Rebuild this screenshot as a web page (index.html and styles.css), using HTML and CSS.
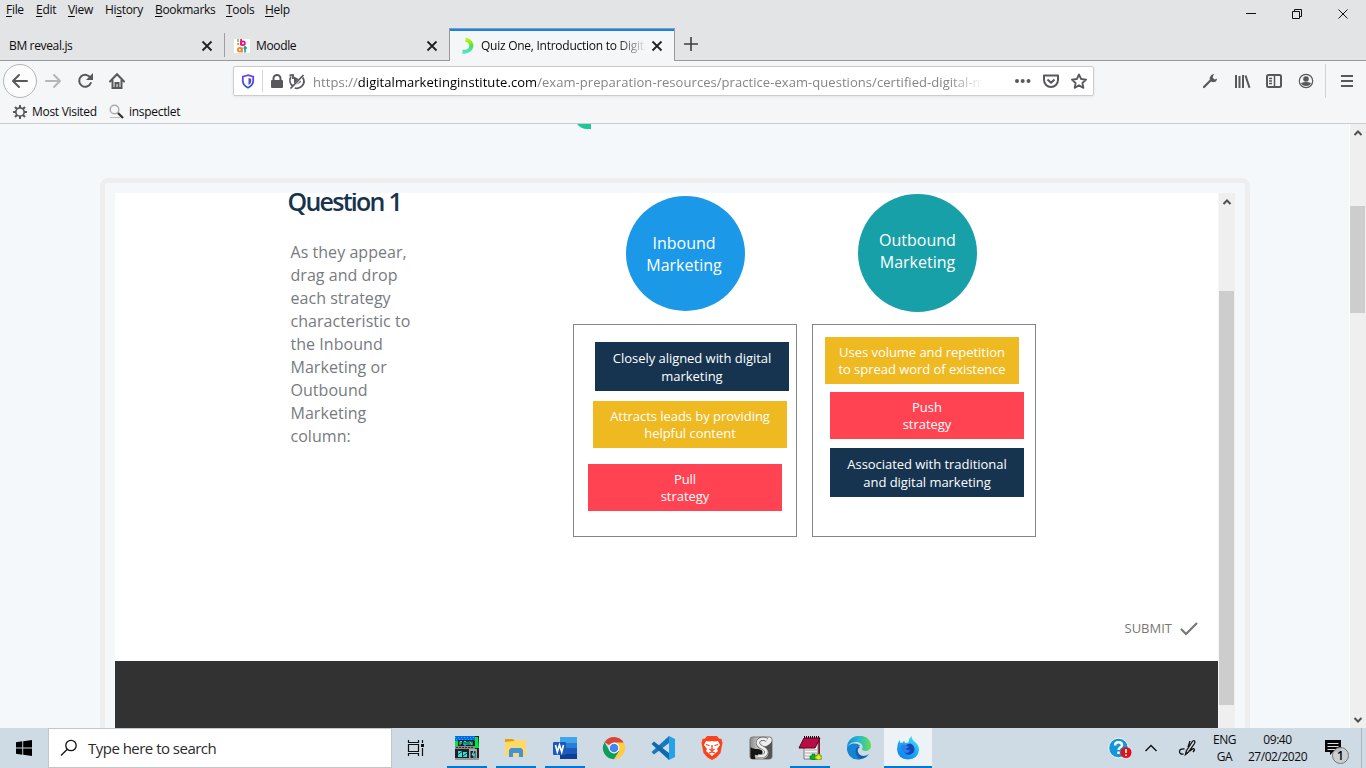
FILE: index.html
```html
<!DOCTYPE html>
<html lang="en">
<head>
<meta charset="utf-8">
<title>Quiz One, Introduction to Digital Marketing</title>
<link rel="stylesheet" href="styles.css">
</head>
<body>
<header class="titlebar">
  <div class="menurow">
    <nav class="menu"><span class="m1"><u>F</u>ile</span><span class="m2"><u>E</u>dit</span><span class="m3"><u>V</u>iew</span><span class="m4">Hi<u>s</u>tory</span><span class="m5"><u>B</u>ookmarks</span><span class="m6"><u>T</u>ools</span><span class="m7"><u>H</u>elp</span></nav>
    <svg class="winctl" width="130" height="28" viewBox="1236 0 130 28" fill="none" stroke="#111"><path d="M1246 13.500h10M1292.500 11.500h7v7h-7zM1294.500 11v-1.500h7v7h-2M1338.500 9.500l9 9M1347.500 9.500l-9 9"/></svg>
  </div>
  <div class="tabs">
    <div class="tab tab-a"><span class="label">BM reveal.js</span><svg class="close" width="12" height="12" viewBox="0 0 12 12"><path d="M1.500 1.500l9 9m0-9l-9 9"/></svg></div>
    <div class="tab tab-b">
      <svg class="fav" width="16" height="16" viewBox="0 0 16 16" fill="none" stroke-width="1.700"><path fill="#fff" d="M0 1h16v14H0z"/><path stroke="#8bc63e" d="M4 1v3"/><path stroke="#f58220" d="M4 5v2"/><path stroke="#e5127d" d="M7 1v6.500"/><circle cx="9" cy="5.300" r="1.900" stroke="#e5127d"/><circle cx="5.800" cy="11.800" r="1.900" stroke="#f58220"/><path stroke="#f58220" d="M8 9.500v5"/><path stroke="#00a7b5" d="M11 8v6.500M9.500 10h3.500"/></svg>
      <span class="label">Moodle</span><svg class="close" width="12" height="12" viewBox="0 0 12 12"><path d="M1.500 1.500l9 9m0-9l-9 9"/></svg></div>
    <div class="tab tab-c">
      <svg class="fav" width="16" height="18" viewBox="0 0 16 18" fill="none" stroke-width="4"><defs><linearGradient id="lg" x1="0" y1="0" x2="0" y2="1"><stop offset="0" stop-color="#b8f500"/><stop offset=".5" stop-color="#4be04e"/><stop offset="1" stop-color="#4fe3c9"/></linearGradient></defs><path stroke="url(#lg)" d="M6.500 2.800C15.500 4 14 15.500 3.500 14.800"/></svg>
      <span class="label">Quiz One, Introduction to Digit<span class="fadeout">a</span></span><svg class="close" width="12" height="12" viewBox="0 0 12 12"><path d="M1.500 1.500l9 9m0-9l-9 9"/></svg></div>
    <svg class="plus" width="14" height="14" viewBox="0 0 14 14" stroke="#3d3e40" stroke-width="1.600"><path d="M7 0v14M0 7h14"/></svg>
  </div>
</header>
<section class="toolbar">
  <div class="navrow">
    <svg class="navicons" width="140" height="40" viewBox="0 61 140 40" fill="none" stroke="#58585c" stroke-width="2" stroke-linecap="round" stroke-linejoin="round"><circle cx="20" cy="81" r="16.500" fill="#fcfcfc" stroke="#b5b5b8" stroke-width="1"/><path d="M13 81h14M19 75l-6 6 6 6"/><path stroke="#b6b6b9" d="M46 81h14M54 75l6 6-6 6"/><path d="M90.500 78a6 6 0 1 0 .3 5"/><path fill="#58585c" stroke="none" d="M86 80h7v-7z"/><path stroke-linejoin="miter" d="M110 81.500l7-7.200 7 7.200M112.500 80.500V88h9v-7.500M115.500 88v-5h3v5"/></svg>
    <div class="urlbar">
      <svg width="74" height="28" viewBox="234 67 74 28" fill="none" stroke="#58585c"><path stroke="url(#sh)" stroke-width="1.800" d="M248 75.200l5.200 1.500v4c0 3.500-2 5.500-5.200 7-3.200-1.500-5.200-3.500-5.200-7v-4z"/><defs><linearGradient id="sh" x1="0" x2="0" y1="0" y2="1"><stop stop-color="#7542e5"/><stop offset="1" stop-color="#2b55c8"/></linearGradient></defs><path fill="#4e4bd8" stroke="none" d="M248.500 78l2.700.7v3q-.3 2.200-2.700 3.300z"/><path stroke="#d7d7db" d="M262.500 70v22"/><rect x="271" y="80" width="12" height="8" rx="1" fill="#58585c" stroke="none"/><path stroke-width="2" d="M273.500 81v-2.500a3.500 3.500 0 0 1 7 0V81"/><path stroke-width="1.800" d="M290.800 77a7 7 0 0 0 2 9M302.700 77.500a7 7 0 0 1-8 10.500M290.500 88.500l13-13.500M289.500 75.500l3.500-.5v4"/><path fill="#58585c" stroke="none" d="M294 76.500l4.500 2.500-4.500 4.500zM300.500 80.500l.5 1.500-5 3z"/></svg>
      <div class="url">https://<b>digitalmarketinginstitute.com</b>/exam-preparation-resources/practice-exam-questions/certified-digital-m</div>
      <svg width="84" height="28" viewBox="1009 67 84 28" fill="none" stroke="#58585c" stroke-width="2"><g fill="#58585c" stroke="none"><circle cx="1017" cy="81" r="2"/><circle cx="1022.700" cy="81" r="2"/><circle cx="1028.500" cy="81" r="2"/></g><path stroke-linejoin="round" d="M1044 75.500h14v4.500a7 7 0 0 1-14 0zM1047.500 79.500l3.500 3.300 3.500-3.300"/><path stroke-width="1.800" stroke-linejoin="round" d="M1079 74.500l2.100 4.500 5 .6-3.700 3.400 1 4.900-4.400-2.500-4.400 2.500 1-4.900-3.700-3.400 5-.6z"/></svg>
    </div>
    <svg class="right" width="166" height="40" viewBox="1200 61 166 40" fill="none" stroke="#58585c" stroke-width="2"><path stroke-width="2.200" stroke-linecap="round" d="M1204 87l8-8"/><path fill="#58585c" stroke="none" d="M1214.500 74l-3 .7-2 3.300.8 3 2.700 1.300 3-.7 1.300-3-2.500 1-2-1.600.3-2.200z"/><path d="M1236 75v13M1239.500 76v12M1243 75v13M1245.500 75.500l4 12.300"/><rect x="1267" y="75" width="14" height="12" rx="1.500"/><path stroke-width="1.500" d="M1274.500 75v12M1269 78.500h3M1269 81h3M1269 83.500h3"/><circle cx="1306" cy="81" r="6.700" stroke-width="1.200"/><circle cx="1306" cy="79" r="2.800" fill="#58585c" stroke="none"/><path fill="#58585c" stroke="none" d="M1301 83q5-2 10 0-1 3-5 3t-5-3"/><path stroke="#d1d2d5" stroke-width="1" d="M1325.500 64v34"/><path d="M1341 76h12M1341 81h12M1341 86h12"/></svg>
  </div>
  <div class="bookmarks">
    <svg width="16" height="16" viewBox="0 0 16 16" fill="none" stroke="#58585c"><circle cx="8" cy="8" r="4.200" stroke-width="1.700"/><path stroke-width="2" d="M8 1v3M8 12v3M1 8h3M12 8h3M3 3l2.300 2.300M10.700 10.700L13 13M13 3l-2.300 2.300M5.300 10.700L3 13"/></svg>
    <span class="bk1">Most Visited</span>
    <svg class="lens" width="16" height="16" viewBox="0 0 16 16" fill="none"><circle cx="5.500" cy="5.500" r="4.300" fill="#f5f9fb" stroke="#aaa" stroke-width="1.400"/><path stroke="#333" stroke-width="2.300" d="M9 9l5 5"/><path stroke="#bbb" d="M1 13.500h10"/></svg>
    <span class="bk2">inspectlet</span>
  </div>
</section>
<main class="page">
  <div class="view">
    <div class="topgap"><svg width="16" height="6" viewBox="0 0 16 6"><path fill="#1bc89b" d="M1 0h14v5H11Q5 5 1 0z"/></svg></div>
    <div class="frame">
      <div class="quiz">
        <div class="stage">
          <div class="question"><h1>Question 1</h1><p>As they appear,<br>drag and drop<br>each strategy<br>characteristic to<br>the Inbound<br>Marketing or<br>Outbound<br>Marketing<br>column:</p></div>
          <div class="column">
            <div class="disc disc-in">Inbound<br>Marketing</div>
            <div class="bin">
              <div class="card navy c1">Closely aligned with digital<br>marketing</div>
              <div class="card gold c2">Attracts leads by providing<br>helpful content</div>
              <div class="card red c3">Pull<br>strategy</div>
            </div>
          </div>
          <div class="column out">
            <div class="disc disc-out">Outbound<br>Marketing</div>
            <div class="bin">
              <div class="card gold d1">Uses volume and repetition<br>to spread word of existence</div>
              <div class="card red d2">Push<br>strategy</div>
              <div class="card navy d3">Associated with traditional<br>and digital marketing</div>
            </div>
          </div>
        </div>
        <div class="submit"><span>SUBMIT</span><svg width="18" height="14" viewBox="0 0 18 14" fill="none" stroke="#777" stroke-width="2.200"><path d="M1 7l5 5L17 1"/></svg></div>
        <div class="dark"></div>
      </div>
      <div class="scroll inner"><svg width="16" height="16" viewBox="0 0 16 16"><path d="M4.500 11l3.500-3.500 3.500 3.500"/></svg><i></i></div>
    </div>
  </div>
  <div class="scroll outer"><svg width="16" height="16" viewBox="0 0 16 16"><path d="M4.500 11l3.500-3.500 3.500 3.500"/></svg><i></i><svg class="down" width="16" height="16" viewBox="0 0 16 16"><path d="M4.500 6l3.500 3.500 3.500-3.500"/></svg></div>
</main>
<footer class="taskbar">
  <div class="start"><svg width="16" height="16" viewBox="0 0 16 16"><path d="M0 2.200L6.300 1.300V7.500H0zM7.200 1.200L16 0v7.500H7.200zM0 8.500h6.300v6.200L0 13.800zM7.200 8.500H16V16l-8.800-1.200z"/></svg></div>
  <div class="search"><svg width="18" height="18" viewBox="0 0 18 18" fill="none" stroke="#111" stroke-width="1.300"><circle cx="11" cy="6.500" r="5.200"/><path d="M7.300 10.200L1 16.500"/></svg><span>Type here to search</span></div>
  <div class="taskview"><svg width="18" height="16" viewBox="0 0 18 16" fill="none" stroke="#111" stroke-width="1.200"><path d="M1.500 4.500h10v7h-10zM1.500 0v2.500h10V0M1.500 16v-2.500h10V16M15.500 0v3M15.500 8v8"/><path fill="#111" stroke="none" d="M14 4h3v3h-3z"/></svg></div>
  <div class="apps">
    <div class="app run"><svg viewBox="0 0 24 24"><path fill="#222" d="M0 0h24v24H0z"/><path fill="#0867e8" d="M0 0h20v5H0z"/><path stroke="#08c6ff" stroke-dasharray="1 2" d="M0 1.500h20M1 3.500h18"/><path fill="#00e83a" d="M20 1h3l1 11h-4zM0 5h3v6H0z"/><path fill="#0d2420" d="M3 4h16v6H3z"/><path stroke="#20edd0" stroke-width="1" fill="none" d="M5 9V5.500h2M5 7h2M9 9V5.500h2V9H9M13 9V5.500M15 9V5.500l2 3.500V5.500"/><path fill="#8a8a8a" d="M0 10h20v3H0z"/><path stroke="#333" stroke-dasharray="2 1" d="M1 11.500h18"/><path fill="#2ee3e0" d="M3 15h4v6H3zM8 16h4v5H8z"/><path stroke="#0a5050" d="M3 18.500l4-3M8 20l4-3"/><path fill="#aaa" d="M14 13h8v10h-8z"/><path fill="#123" d="M15.500 15h5v8h-5z"/><path stroke="#6ee" fill="none" d="M19 15l-2 4h3M19 17v5"/><path fill="#999" d="M0 22h24v2H0z"/></svg></div>
    <div class="app run"><svg viewBox="0 0 24 24"><path fill="#e2a100" d="M1 3h8l2 2v4H1z"/><path fill="#ffd86a" d="M1 6l9-1 1-1h11v16H1z"/><path fill="#3f94d8" d="M5 21v-7l2-2h10l2 2v7h-4v-4H9v4z"/></svg></div>
    <div class="app run"><svg viewBox="0 0 24 24"><path fill="#41a5ee" d="M7 1h17v6H7z"/><path fill="#2b7cd3" d="M7 7h17v5H7z"/><path fill="#185abd" d="M7 12h17v6H7z"/><path fill="#103f91" d="M7 18h17v5H7z"/><rect y="6" width="13" height="13" rx="1" fill="#185abd"/><path fill="none" stroke="#fff" stroke-width="1.700" d="M2.500 9l1.800 7 2.200-7 2.200 7 1.800-7"/></svg></div>
    <div class="app"><svg viewBox="0 0 24 24"><path fill="#db4437" d="M12 12L2.500 6.200A11.200 11.200 0 0 1 21.700 6.500z"/><path fill="#ffcd40" d="M12 12V6.500h9.700A11.200 11.200 0 0 1 12 23.200L17 14z"/><path fill="#109d58" d="M12 12l5 3-5 8.200A11.200 11.200 0 0 1 2.500 6.200l5 8.300z"/><circle cx="12" cy="12" r="5.400" fill="#fff"/><circle cx="12" cy="12" r="4.300" fill="#4285f4"/></svg></div>
    <div class="app"><svg viewBox="0 0 24 24"><path fill="#1479bd" d="M18 0v7L3 18.500.5 16z"/><path fill="#0d6aad" d="M.5 8L3 5.500 18 17v7z"/><path fill="#25a2e9" d="M18 0l6 3v18l-6 3z"/></svg></div>
    <div class="app"><svg viewBox="0 0 24 24"><path fill="#fb421f" d="M7 0h10l2 2.500 2.500.5 1 4-2 10-4 4.500L12 24l-4.500-2.500-4-4.500L1.500 7l1-4L5 2.500z"/><path fill="#fff" d="M6 5l3 .5L12 5l3 .5 3-.5 2 4-3 4 1 2-6 5-6-5 1-2-3-4z"/><path fill="none" stroke="#fb421f" stroke-width="1.300" d="M6 8.500l3.500 1M18 8.500l-3.500 1M12 9v5M9.500 13l2.500 2 2.500-2M9 17l3-1 3 1"/></svg></div>
    <div class="app"><svg viewBox="0 0 24 24"><defs><linearGradient id="sc"><stop stop-color="#888"/><stop offset=".6" stop-color="#f0f0f0"/></linearGradient></defs><rect x="1" y="1" width="22" height="22" rx="2.500" fill="url(#sc)" stroke="#777"/><path fill="#151515" d="M1.500 11q2 2 8 2 5 1 4 4-1 3-6 2-3-1-1 4H3q-1.500 0-1.500-2z"/><path fill="#555" d="M14 23q7-3 5-8-1-3-5-4 6-1 9-6v15q0 3-3 3z"/><path fill="none" stroke="#555" stroke-width="4" d="M18 4c-7-4-13 3-6 7 8 3 7 10-3 9"/><path fill="none" stroke="#eee" stroke-width="2.800" d="M18 4c-7-4-13 3-6 7 8 3 7 10-3 9"/></svg></div>
    <div class="app run"><svg viewBox="0 0 24 24"><path fill="#8b1030" d="M17 2h5v20h-5z"/><path fill="#f5f5f5" stroke="#777" d="M6 7h14v16H6z"/><path stroke="#aaa" d="M7 14h12M7 17h12M7 20h12"/><path fill="#b90b45" stroke="#540018" d="M6 2h16l-5 10H1z"/><path stroke="#111" stroke-dasharray="1 1" stroke-width="2" d="M6 1h16"/><path fill="#0ab81c" stroke="#063" stroke-width=".6" d="M14 18h3v2h2v3h-2v1h-3v-1h-2v-3h2z"/><path fill="#e5ed12" stroke="#372" stroke-width=".6" d="M19 18h3v2h2v3h-2v1h-3v-1h-2v-3h2z"/></svg></div>
    <div class="app"><svg viewBox="0 0 24 24"><defs><linearGradient id="ed"><stop stop-color="#168bd8"/><stop offset=".5" stop-color="#27bad0"/><stop offset="1" stop-color="#68df48"/></linearGradient></defs><path fill="#0c61b4" d="M0 12a12 12 0 0 0 22 6q-6 4-10 0-3-5 1-7-8-5-13 1"/><path fill="url(#ed)" d="M0 12C0-4 24-4 24 10c0 6-9 6-9 3 2-3-1-7-6-7-5 0-8 3-9 6"/><path fill="#1684d3" d="M0 12c1-5 11-6 13-2-6 1-6 9 0 13Q1 25 0 12"/></svg></div>
    <div class="app active"><svg viewBox="0 0 24 24"><defs><linearGradient id="fx" x1="0" x2=".7" y1="1" y2="0"><stop stop-color="#087ee8"/><stop offset=".6" stop-color="#22a8fa"/><stop offset="1" stop-color="#3be1f6"/></linearGradient></defs><path fill="url(#fx)" d="M3.500 4l1 3 2.500-.5 1-2 1 2.500 3.500-.5Q13 2 15.500 0q.5 4 4 6.500 3.500 3 3.500 7.500-1 9-11 9.500Q2 23 1 13.500 1 8 3.500 4"/><path fill="#1a45b8" d="M7 10.500l4-2 3-1q4 1 4.500 5.500 0 4-4 5.500-5 1-7.500-4z"/><path fill="#2b7fe8" d="M5 9.500q3-1.500 5-.5l3 2-3 2q2 2 4 .5 0 3-3 3.500-4 0-6-4z"/></svg></div>
  </div>
  <div class="tray">
    <svg width="110" height="40" viewBox="1100 728 110 40" fill="none"><circle cx="1118.500" cy="748" r="9.800" fill="#1597d5" stroke="#eef7fa"/><path stroke="#fff" stroke-width="2.400" d="M1115 745.500c0-4.500 7-4 7-.5 0 2.500-3.500 2-3.500 5M1118.500 751.500v2.500"/><circle cx="1126" cy="752.500" r="5.500" fill="#e2101b"/><path stroke="#fff" stroke-width="1.700" d="M1126 749v4M1126 754.500v1.500"/><path stroke="#111" stroke-width="1.400" d="M1145.500 751l5.500-5.500 5.500 5.500"/><path stroke="#111" stroke-width="1.300" d="M1185.500 754.500l.8-3.500 5.700-9q1.500-2 2.500-1t0 2.500l-6 8.500zM1184.500 749q-5-.5-5 2.500t4 2.500M1190 741l-2 6M1190 751q4-4 4.500-1l-1.500 2"/></svg>
    <div class="lang">ENG<br>GA</div>
    <div class="clock">09:40<br><span>27/02/2020</span></div>
    <svg class="notify" width="54" height="40" viewBox="1312 728 54 40"><path fill="#080808" d="M1325 740h16v12h-8l-3 3v-3h-5z"/><path stroke="#d4dfe7" d="M1327.500 743.500h11M1327.500 746.500h11M1327.500 749.500h8"/><circle cx="1340.500" cy="755.500" r="8" fill="#c9cdd0" fill-opacity=".93" stroke="#777"/><text x="1337" y="759.500" class="badge">1</text><path stroke="#aab7c1" d="M1361.500 728v40"/></svg>
  </div>
</footer>
</body>
</html>
```
FILE: styles.css
```css
* { box-sizing: border-box; }
body { margin: 0; width: 1366px; height: 768px; overflow: hidden; display: flex; flex-direction: column; background: #f4f8fb; font: 12px/16px "Open Sans", "Noto Sans", sans-serif; color: #0c0c0d; }
svg { display: block; flex: none; }
.titlebar { height: 61px; background: #e3e4e6; border-bottom: 1px solid #98999b; flex: none; }
.menurow { height: 28px; display: flex; justify-content: space-between; }
.menu { display: flex; padding: 2px 0 0 6px; white-space: nowrap; letter-spacing: -.3px; }
.menu u { text-underline-offset: 2px; }
.m1 { width: 30px; } .m2 { width: 32px; } .m3 { width: 37px; } .m4 { width: 50px; } .m5 { width: 71px; } .m6 { width: 39px; }
.tabs { height: 33px; display: flex; align-items: stretch; }
.tab { display: flex; align-items: center; padding-top: 2px; letter-spacing: -.35px; white-space: nowrap; }
.label { flex: 1; }
.close { fill: none; stroke: #202022; stroke-width: 1.8; }
.tab-a { width: 225px; padding-left: 9px; padding-right: 12px; background: linear-gradient(#9e9fa1, #9e9fa1) 224px 5px / 1px 24px no-repeat; }
.tab-b { width: 224px; padding-left: 9px; padding-right: 11px; }
.fav { margin-right: 6px; }
.tab-c { width: 226px; background: #f5f6f7; border: 1px solid #98999b; border-bottom: 0; box-shadow: inset 0 2px #0a84ff; padding-left: 9px; padding-right: 11px; }
.tab-c .label { letter-spacing: -.26px; width: 164px; -webkit-mask-image: linear-gradient(90deg, #000 82%, transparent 100%); mask-image: linear-gradient(90deg, #000 82%, transparent 100%); margin-right: 4px; }
.fadeout { opacity: .2; }
.plus { margin: 9px 0 0 9px; }
.toolbar { height: 63px; background: #f5f6f7; border-bottom: 1px solid #cbccce; flex: none; }
.navrow { height: 40px; display: flex; }
.urlbar { margin: 5px 106px 0 93px; width: 861px; height: 30px; display: flex; border: 1px solid #ccc; border-radius: 2px; background: #fff; box-shadow: 0 1px 3px #0001; }
.url { margin-left: 5px; width: 670px; margin-right: 26px; white-space: nowrap; font-size: 13px; line-height: 30px; color: #858588; letter-spacing: .055px; -webkit-mask-image: linear-gradient(90deg, #000 95%, transparent 100%); mask-image: linear-gradient(90deg, #000 95%, transparent 100%); }
.url b { color: #000; font-weight: 400; }
.bookmarks { display: flex; align-items: center; height: 21px; padding-left: 12px; letter-spacing: -.3px; }
.bk1 { margin-left: 4px; width: 77px; }
.bk2 { margin-left: 4px; }
.page { height: 604px; display: flex; flex: none; }
.view { width: 1350px; height: 604px; overflow: hidden; border-right: 1px solid #fff; }
.topgap { height: 54px; padding-left: 576px; }
.frame { margin-left: 100px; width: 1150px; height: 600px; border: 5px solid #eee; border-radius: 8px; padding: 10px; display: flex; }
.quiz { width: 1103px; height: 600px; background: #fff; margin-right: 1px; overflow: hidden; }
.stage { height: 345px; display: flex; }
.question { width: 458px; padding-left: 172.500px; }
h1 { margin: -8px 0 0; font: 600 25px/32px "Open Sans", sans-serif; color: #16344e; letter-spacing: -1.75px; }
.question p { margin: 24px 0 0 3px; font-size: 16px; line-height: 23px; color: #777b7f; letter-spacing: .04px; }
.column { width: 224px; }
.out { margin-left: 15px; }
.disc { width: 119px; border-radius: 50%; color: #fff; font-size: 16px; line-height: 22px; text-align: center; }
.disc-in { height: 115px; margin: 3px 0 13px 53px; padding: 36px 3px 0 0; background: #1b98e7; }
.disc-out { height: 118px; margin: .5px 0 12.500px 46px; padding-top: 35px; background: #17a0a7; }
.bin { height: 213px; border: 1px solid #858585; display: flow-root; }
.card { width: 194px; height: 47px; padding-top: 7px; font-size: 13px; line-height: 17px; color: #fff; text-align: center; white-space: nowrap; letter-spacing: -.04px; }
.navy { background: #16344f; height: 48.500px; line-height: 18px; }
.gold { background: #efb922; }
.red { background: #ff4352; }
.c1 { margin: 17px 0 0 21px; } .c2 { margin: 10.500px 0 0 19px; } .c3 { margin: 16px 0 0 14px; }
.d1 { margin: 12px 0 0 12px; } .d2 { margin: 8px 0 0 17px; } .d3 { margin: 9px 0 0 17px; }
.submit { height: 123px; padding: 82px 20px 0 0; display: flex; justify-content: flex-end; align-items: flex-start; gap: 8px; font-size: 13px; line-height: 16px; color: #777; }
.submit svg { margin-top: 2px; }
.dark { height: 140px; background: #323232; }
.scroll { width: 16px; background: #efefef; flex: none; }
.scroll path { fill: none; stroke: #505050; stroke-width: 2; }
.scroll i { display: block; background: #cdcdcd; width: 15px; }
.inner { height: 600px; }
.inner i { margin-top: 82px; height: 414px; }
.inner svg { margin-left: -.500px; }
.outer { display: flex; flex-direction: column; }
.outer svg { margin-left: -.500px; }
.outer i { margin-top: 66px; height: 107px; }
.outer .down { margin-top: auto; }
.taskbar { height: 40px; background: #cedae4; display: flex; flex: none; }
.start { width: 48px; display: flex; align-items: center; justify-content: center; }
.search { width: 344px; border: 1px solid #c3c7ca; background: #fff; display: flex; align-items: center; padding-left: 11px; gap: 10px; font-size: 15px; letter-spacing: -.52px; color: #2b2b2b; }
.taskview { width: 51px; padding: 12px 0 0 15px; }
.apps { display: flex; }
.app { width: 49px; padding: 8px 0 0 12px; height: 40px; }
.app svg { width: 24px; height: 24px; }
.run { background: linear-gradient(#0078d7, #0078d7) 4px 38px / 40px 2px no-repeat; }
.active { background: linear-gradient(#0078d7, #0078d7) 0 38px / 48px 2px no-repeat, linear-gradient(#edf2f6, #edf2f6) 0 0 / 48px 40px no-repeat; }
.tray { margin-left: auto; width: 266px; display: flex; line-height: 17px; text-align: center; letter-spacing: -.45px; }
.lang { width: 29px; padding-top: 3px; }
.clock { width: 77px; padding-top: 3px; }
.notify { margin-left: -4px; }
.badge { font: 600 12px "Open Sans", sans-serif; }
```
